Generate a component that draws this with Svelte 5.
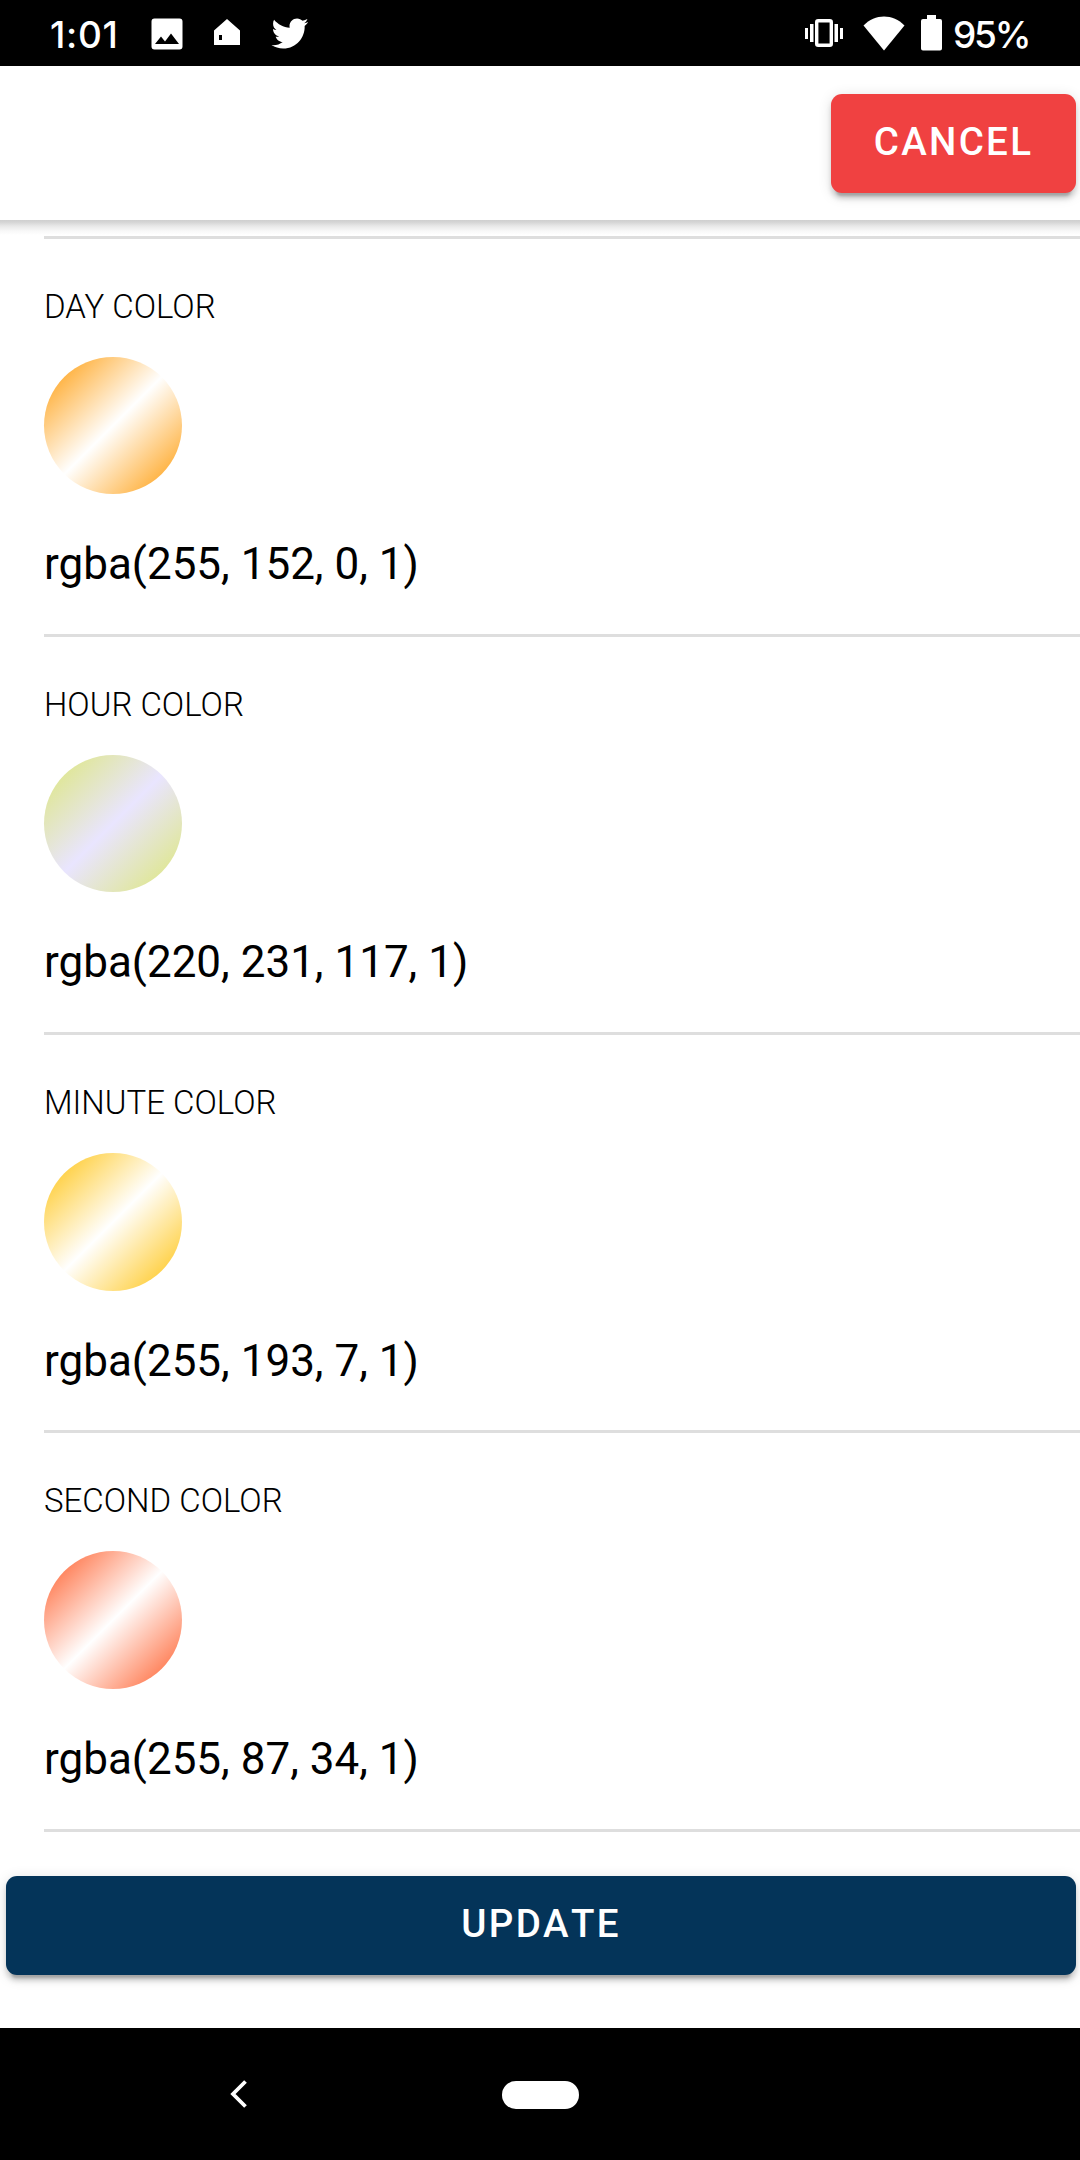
<script>
  const colors = [
    { name: 'DAY COLOR', value: 'rgba(255, 152, 0, 1)', accent: '#ffffff' },
    { name: 'HOUR COLOR', value: 'rgba(220, 231, 117, 1)', accent: '#e9e5ff' },
    { name: 'MINUTE COLOR', value: 'rgba(255, 193, 7, 1)', accent: '#ffffff' },
    { name: 'SECOND COLOR', value: 'rgba(255, 87, 34, 1)', accent: '#ffffff' }
  ];
</script>

<div class="screen">
  <div class="status">
    <span class="clock">1:01</span>
    <svg class="photo" width="32" height="32" viewBox="0 0 32 32" aria-hidden="true">
      <path fill="#fff" fill-rule="evenodd" d="M3.5.5h25a3 3 0 0 1 3 3v25a3 3 0 0 1-3 3h-25a3 3 0 0 1-3-3v-25a3 3 0 0 1 3-3zM4 26h24l-8-10.500-6 8-4-5z" />
    </svg>
    <svg class="house" width="28" height="28" viewBox="0 0 28 28" aria-hidden="true">
      <path fill="#fff" fill-rule="evenodd" d="M14 1l13 11.500V27H1V12.500zM6 17v5h3v-5z" />
    </svg>
    <svg class="bird" width="39" height="39" viewBox="0 0 24 24" aria-hidden="true">
      <path fill="#fff" d="M23.643 4.937c-.835.37-1.732.62-2.675.733.962-.576 1.700-1.490 2.048-2.578-.900.534-1.897.922-2.958 1.130-.850-.904-2.060-1.470-3.400-1.470-2.572 0-4.658 2.086-4.658 4.660 0 .364.042.718.120 1.060-3.873-.195-7.304-2.050-9.602-4.868-.400.690-.630 1.490-.630 2.342 0 1.616.823 3.043 2.072 3.878-.764-.025-1.482-.234-2.110-.583v.060c0 2.257 1.605 4.140 3.737 4.568-.392.106-.803.162-1.227.162-.300 0-.593-.028-.877-.082.593 1.850 2.313 3.198 4.352 3.234-1.595 1.250-3.604 1.995-5.786 1.995-.376 0-.747-.022-1.112-.065 2.062 1.323 4.510 2.093 7.140 2.093 8.570 0 13.255-7.098 13.255-13.254 0-.200-.005-.402-.014-.602.910-.658 1.700-1.477 2.323-2.410z" />
    </svg>
    <span class="spacer"></span>
    <svg class="vibrate" width="38" height="28" viewBox="0 0 38 28" aria-hidden="true">
      <rect x="11.700" y="1.700" width="14.600" height="24.600" rx="1.500" fill="none" stroke="#fff" stroke-width="3.400" />
      <path fill="#fff" d="M0 9h3v11H0zM5 5h3.500v18H5zM29.500 5H33v18h-3.500zM35 9h3v11h-3z" />
    </svg>
    <svg class="wifi" width="42" height="35" viewBox="0 0 42 35" aria-hidden="true">
      <path fill="#fff" d="M.5 9.500C12-2.500 30-2.500 41.500 9.500L21 34.500z" />
    </svg>
    <svg class="battery" width="21" height="36" viewBox="0 0 21 36" aria-hidden="true">
      <path fill="#fff" d="M6 0h9v4h4a2 2 0 0 1 2 2v27.500a2 2 0 0 1-2 2H2a2 2 0 0 1-2-2V6a2 2 0 0 1 2-2h4z" />
    </svg>
    <span class="percent">95%</span>
  </div>

  <header>
    <button class="cancel">CANCEL</button>
  </header>

  <main>
    <ul>
      {#each colors as color}
        <li>
          <span class="label">{color.name}</span>
          <span
            class="swatch"
            style="background-image: linear-gradient(135deg, {color.value}, {color.accent}, {color.value})"
          ></span>
          <span class="value">{color.value}</span>
        </li>
      {/each}
    </ul>
    <button class="update">UPDATE</button>
  </main>

  <nav>
    <svg class="back" width="18" height="28" viewBox="0 0 18 28" aria-hidden="true">
      <path d="M15.500 1.500L3 14 15.500 26.500" fill="none" stroke="#fff" stroke-width="3.800" />
    </svg>
    <span class="home"></span>
  </nav>
</div>

<style>
  :global(body) {
    margin: 0;
    background: #fff;
  }
  .screen {
    width: 1080px;
    height: 2160px;
    display: flex;
    flex-direction: column;
    overflow: hidden;
    background: #fff;
    color: #000;
    font-family: Roboto, sans-serif;
  }
  .status {
    height: 66px;
    flex: none;
    box-sizing: border-box;
    padding: 0 51px 0 50px;
    display: flex;
    align-items: center;
    background: #000;
    color: #fff;
    font-family: Inter, sans-serif;
    font-size: 37px;
    font-weight: 500;
    line-height: 66px;
    font-feature-settings: 'calt' 0;
  }
  .status svg {
    flex: none;
  }
  .clock {
    width: 101px;
    padding-top: 3px;
    white-space: nowrap;
    letter-spacing: 0.7px;
  }
  .photo {
    margin-top: 1px;
  }
  .house {
    margin-left: 30px;
    margin-top: -2px;
  }
  .bird {
    margin-left: 29px;
  }
  .spacer {
    flex: 1;
  }
  .wifi {
    margin-left: 20px;
  }
  .battery {
    margin-left: 16px;
  }
  .percent {
    width: 76px;
    margin-left: 11px;
    padding-top: 3px;
    white-space: nowrap;
    letter-spacing: -2.2px;
  }
  header {
    height: 154px;
    flex: none;
    box-sizing: border-box;
    padding: 28px 4px 0 0;
    display: flex;
    justify-content: flex-end;
    align-items: flex-start;
  }
  button {
    height: 99px;
    border: 0;
    border-radius: 11px;
    padding: 0 0 4px;
    color: #fff;
    font: 500 38.5px/46px Roboto, sans-serif;
    font-kerning: none;
    letter-spacing: 2.31px;
    box-shadow:
      0 8.25px 2.75px -5.5px rgba(0, 0, 0, 0.2),
      0 5.5px 5.5px 0 rgba(0, 0, 0, 0.14),
      0 2.75px 13.75px 0 rgba(0, 0, 0, 0.12);
  }
  .cancel {
    width: 245px;
    background: #f04141;
  }
  main {
    flex: 1;
    display: flex;
    flex-direction: column;
    background: linear-gradient(#cfcfcf, #d4d4d4 2px, #e8e8e8 6px, #f8f8f8 11px, #fff 15px) top / 100% 15px no-repeat;
  }
  ul {
    list-style: none;
    margin: 16px 0 0 44px;
    padding: 0;
    border-top: 3px solid #dedede;
  }
  li {
    height: 398px;
    box-sizing: border-box;
    padding-top: 48px;
    border-bottom: 3px solid #dedede;
    display: flex;
    flex-direction: column;
    align-items: flex-start;
  }
  li:last-child {
    height: 399px;
  }
  .label {
    font-size: 33px;
    font-weight: 300;
    line-height: 39px;
  }
  .swatch {
    width: 138px;
    height: 137px;
    margin-top: 31px;
    border-radius: 50%;
  }
  li:nth-child(n + 3) .swatch {
    height: 138px;
  }
  .value {
    margin-top: 44px;
    font-size: 44px;
    line-height: 52px;
  }
  .update {
    margin: 44px 4px 0 6px;
    background: #043459;
  }
  nav {
    height: 132px;
    flex: none;
    display: flex;
    align-items: center;
    background: #000;
  }
  .back {
    margin: 0 0 0 230px;
  }
  .home {
    width: 77px;
    height: 28px;
    margin: 1px 0 0 254px;
    border-radius: 14px;
    background: #fff;
  }
</style>
